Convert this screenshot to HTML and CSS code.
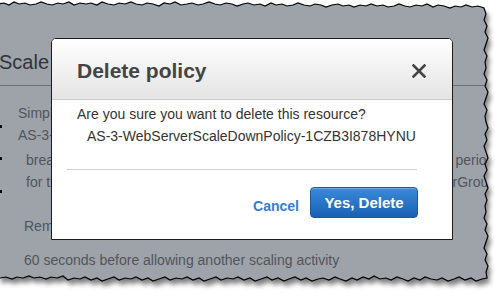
FILE: index.html
```html
<!DOCTYPE html>
<html lang="en">
<head>
	<meta charset="UTF-8">
	<meta name="viewport" content="width=device-width, initial-scale=1.0">
	<title>Delete policy</title>
	<link rel="stylesheet" href="styles.css">
</head>
<body>

	<div class="shot">
		<div class="page">
			<div class="page-head">
				<h1>Scale Down Policy</h1>
			</div>
			<div class="page-body">
				<p class="line">Simple scaling policy, triggered when the alarm</p>
				<p class="line">AS-3-WebServerScaleDownPolicy-1CZB3I878HYNU-High</p>
				<p class="line indent breach">breaches the alarm threshold: CPUUtilization &lt; 30 for 2 consecutive periods of 300 seconds</p>
				<p class="line indent">for the metric dimensions AutoScalingGroupName = AS-3-WebServerGroup-1HZ</p>
				<p class="line step">Remove 1 instances when 30 &gt;= CPUUtilization</p>
				<p class="line wait">60 seconds before allowing another scaling activity</p>
			</div>
		</div>

		<div class="modal">
			<div class="modal-head">
				<h2>Delete policy</h2>
				<svg class="close" width="14" height="14" viewBox="0 0 14 14">
					<path d="M1.5 1.5 L12.5 12.5 M12.5 1.5 L1.5 12.5" stroke="#444" stroke-width="2.6" stroke-linecap="square" fill="none"/>
				</svg>
			</div>
			<div class="modal-body">
				<p>Are you sure you want to delete this resource?</p>
				<p class="resource">AS-3-WebServerScaleDownPolicy-1CZB3I878HYNU</p>
			</div>
			<hr>
			<div class="modal-foot">
				<a class="cancel" href="#">Cancel</a>
				<button type="button">Yes, Delete</button>
			</div>
		</div>

		<!-- torn paper edge round the screenshot -->
		<svg class="torn" width="495" height="293" viewBox="0 0 495 293">
			<defs>
				<path id="edge" d="M-2,4 4,3 9,5 14,2 19,4 25,3 30,5 36,4 41,2 47,4 52,5 58,3 63,4 69,2 74,5 80,3 86,4 91,3 97,5 102,2 108,4 114,5 119,3 125,4 131,2 136,4 142,5 147,3 153,4 159,6 164,3 170,4 175,2 181,5 187,4 192,3 198,5 203,4 209,2 215,4 220,5 226,3 232,4 237,6 243,4 248,3 254,5 260,4 265,6 271,3 276,5 282,4 287,6 293,5 298,3 304,5 310,6 315,4 321,5 326,7 332,5 338,4 343,6 349,5 354,7 360,5 366,6 371,4 377,6 383,5 388,7 394,6 399,4 405,6 410,7 416,5 422,6 427,4 433,7 438,5 444,6 450,8 455,6 461,7 466,5 472,7 478,6 484,8 486,14 484,20 487,26 485,32 488,38 486,44 484,50 487,56 485,62 486,68 484,74 487,80 485,86 488,92 486,98 484,104 487,110 485,116 486,122 488,128 485,134 487,140 484,146 486,152 488,158 485,164 487,170 484,176 486,182 488,188 485,194 487,200 485,206 486,212 484,218 487,224 485,230 488,236 486,242 484,248 487,254 485,260 488,266 486,272 487,278 482,279 476,281 471,278 465,280 459,277 454,279 448,281 442,278 437,280 431,279 425,277 420,280 414,278 408,281 403,279 397,277 391,280 386,278 380,279 374,276 369,279 363,277 357,280 352,278 346,281 340,279 335,277 329,280 323,278 318,279 312,281 306,278 301,280 295,277 289,279 284,281 278,278 272,280 267,277 261,279 255,281 250,278 244,280 238,277 233,279 227,278 221,280 216,277 210,279 204,281 199,278 193,280 187,277 182,279 176,278 170,280 165,277 159,279 153,281 148,278 142,280 136,277 131,279 125,278 119,280 114,277 108,279 102,281 97,278 91,280 85,277 80,279 74,278 68,280 63,276 57,278 51,277 46,279 40,277 34,278 29,276 23,278 17,277 12,279 6,277 0,278 -2,278 Z"/>
				<mask id="outside">
					<rect width="495" height="293" fill="#fff"/>
					<use href="#edge" fill="#000"/>
				</mask>
				<filter id="soft" x="-10%" y="-10%" width="120%" height="120%">
					<feGaussianBlur stdDeviation="2.5"/>
				</filter>
			</defs>
			<rect width="495" height="293" fill="#fff" mask="url(#outside)"/>
			<g mask="url(#outside)">
				<use href="#edge" transform="translate(3,5)" fill="#000" opacity="0.5" filter="url(#soft)"/>
			</g>
			<use href="#edge" fill="none" stroke="#000" stroke-width="1.2"/>
			<rect x="0" y="125" width="2" height="3" fill="#000"/>
			<rect x="0" y="157" width="2" height="3" fill="#000"/>
			<rect x="0" y="190" width="2" height="3" fill="#000"/>
		</svg>
	</div>

</body>
</html>
```

FILE: styles.css
```css
* {
	box-sizing: border-box;
}
body {
	margin: 0;
	background: #fff;
	font-family: "Liberation Sans", Arial, sans-serif;
}
.shot {
	position: relative;
	width: 495px;
	height: 293px;
	overflow: hidden;
	background: #9ea3a9;
}
.page-head {
	height: 86px;
	padding-top: 49px;
	border-bottom: 1px solid #6c7178;
}
.page-head h1 {
	margin: 0 0 0 -1px;
	font-size: 20px;
	font-weight: normal;
	line-height: 26px;
	color: #30353b;
	white-space: nowrap;
}
.page-body {
	padding: 16px 0 0 18px;
}
.line {
	margin: 0;
	font-size: 14px;
	line-height: 22px;
	color: #50555c;
	white-space: nowrap;
}
.line.indent {
	padding-left: 8px;
}
.line.breach {
	margin-top: 3px;
	word-spacing: 0.5px;
}
.line.step {
	margin-top: 22px;
	padding-left: 6px;
}
.line.wait {
	margin-top: 12px;
	padding-left: 6px;
}
.modal {
	position: absolute;
	left: 51px;
	top: 38px;
	width: 402px;
	height: 202px;
	background: #fff;
	border: 1px solid #1c1c1c;
	border-radius: 5px 5px 0 0;
	overflow: hidden;
}
.modal-head {
	display: flex;
	align-items: center;
	justify-content: space-between;
	height: 61px;
	padding: 4px 26px 0 25px;
	background: linear-gradient(#fff, #e4e4e4);
	border-bottom: 1px solid #cdcdcd;
}
.modal-head h2 {
	margin: 0;
	font-size: 21px;
	font-weight: bold;
	color: #444;
}
.close {
	display: block;
}
.modal-body {
	padding: 3px 0 0 25px;
	font-size: 14px;
	line-height: 22px;
	color: #333;
}
.modal-body p {
	margin: 0;
}
.modal-body .resource {
	padding-left: 10px;
}
.modal hr {
	width: 350px;
	margin: 22px 0 0 15px;
	border: 0;
	border-top: 1px solid #cfcfcf;
}
.modal-foot {
	display: flex;
	align-items: center;
	justify-content: flex-end;
	gap: 11px;
	margin-top: 17px;
	padding-right: 34px;
}
.cancel {
	margin-top: 7px;
	font-size: 14px;
	font-weight: bold;
	color: #2f80d6;
	text-decoration: none;
}
button {
	width: 108px;
	height: 31px;
	padding: 0;
	font-family: inherit;
	font-size: 15px;
	font-weight: bold;
	color: #fff;
	background: linear-gradient(#3a8ad9, #1a60b4);
	border: 1px solid #1a58a6;
	border-radius: 4px;
	box-shadow: inset 0 1px 0 rgba(255, 255, 255, 0.25);
	cursor: pointer;
}
.torn {
	position: absolute;
	left: 0;
	top: 0;
	pointer-events: none;
}
```
